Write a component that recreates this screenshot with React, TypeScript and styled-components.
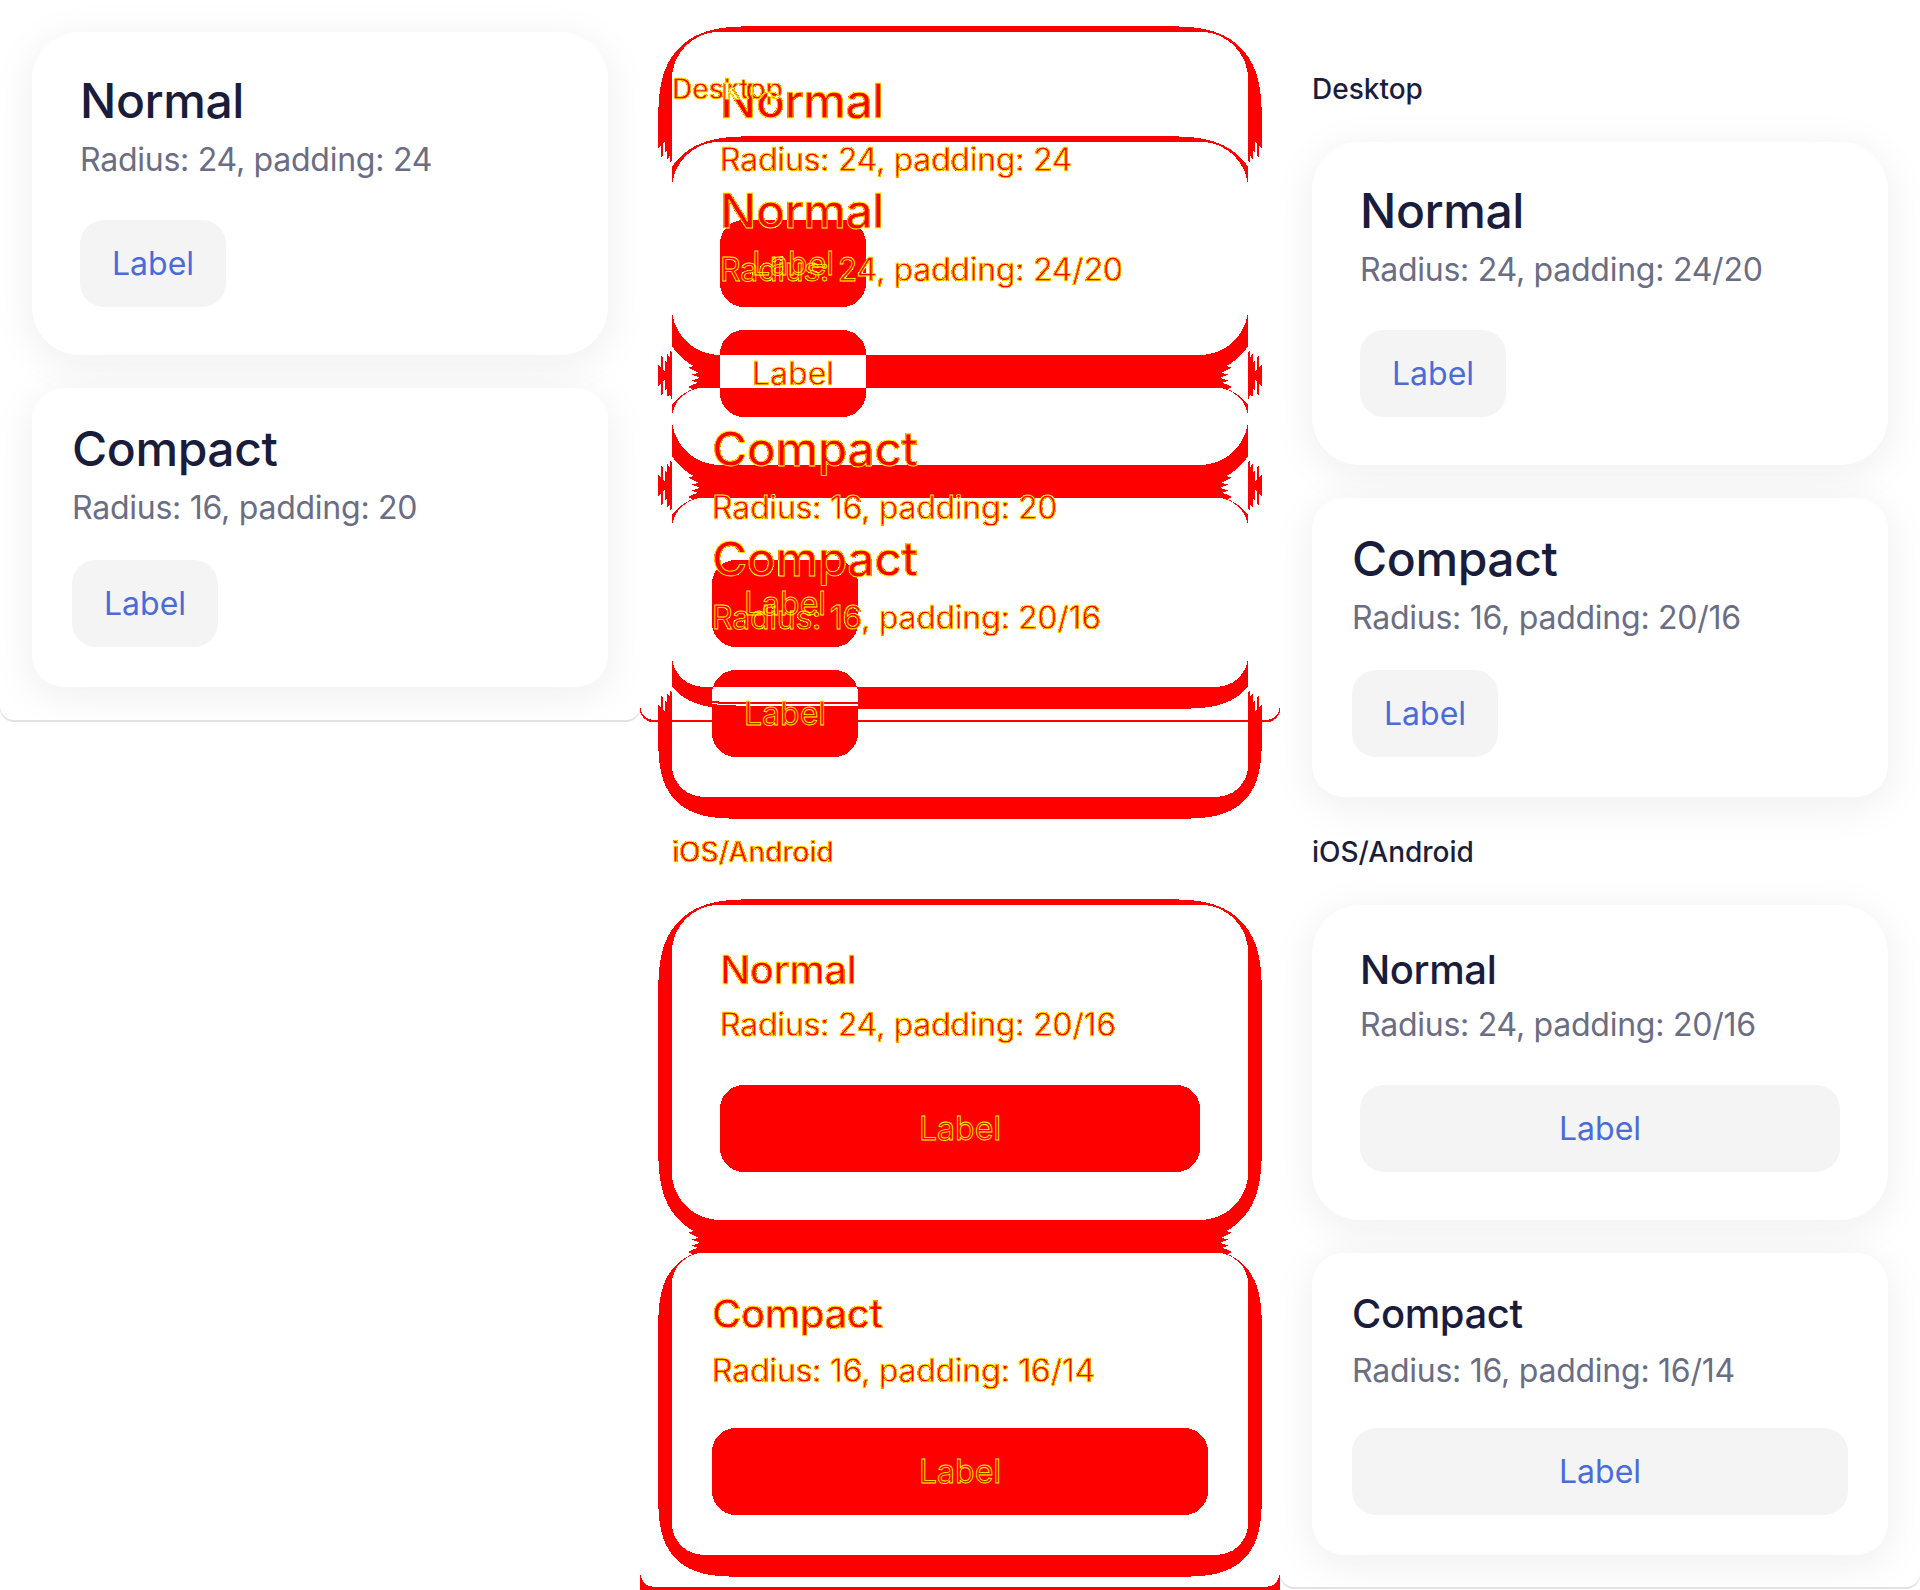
import React from "react";
import styled, { createGlobalStyle, css } from "styled-components";

type Variant = "normal" | "compact";
type Platform = "desktop" | "mobile";

interface CardSpec {
  variant: Variant;
  title: string;
  caption: string;
}

interface Metrics {
  pad: string;
  radius: number;
  titleSize: number;
  titleLh: number;
  subGap: number;
  btnGap: number;
}

const METRICS: Record<string, Metrics> = {
  "desktop-normal": { pad: "48px", radius: 48, titleSize: 48, titleLh: 42, subGap: 18, btnGap: 40 },
  "desktop-compact": { pad: "40px", radius: 32, titleSize: 48, titleLh: 42, subGap: 18, btnGap: 32 },
  "mobile-normal": { pad: "48px", radius: 48, titleSize: 40, titleLh: 34, subGap: 18, btnGap: 40 },
  "mobile-compact": { pad: "44px 40px 40px", radius: 32, titleSize: 40, titleLh: 34, subGap: 20, btnGap: 37 },
};

const legacyCards: CardSpec[] = [
  { variant: "normal", title: "Normal", caption: "Radius: 24, padding: 24" },
  { variant: "compact", title: "Compact", caption: "Radius: 16, padding: 20" },
];

const sections: { label: string; platform: Platform; cards: CardSpec[] }[] = [
  {
    label: "Desktop",
    platform: "desktop",
    cards: [
      { variant: "normal", title: "Normal", caption: "Radius: 24, padding: 24/20" },
      { variant: "compact", title: "Compact", caption: "Radius: 16, padding: 20/16" },
    ],
  },
  {
    label: "iOS/Android",
    platform: "mobile",
    cards: [
      { variant: "normal", title: "Normal", caption: "Radius: 24, padding: 20/16" },
      { variant: "compact", title: "Compact", caption: "Radius: 16, padding: 16/14" },
    ],
  },
];

const GlobalStyle = createGlobalStyle`
  html, body {
    margin: 0;
    padding: 0;
    background: #ffffff;
  }
  body {
    font-family: Inter, "Noto Sans", "Liberation Sans", sans-serif;
    -webkit-font-smoothing: antialiased;
  }
  * { box-sizing: border-box; }
`;

const traceText = css`
  color: transparent;
  -webkit-text-stroke: 0.8px #ffff00;
`;

const Sheet = styled.div`
  display: flex;
  align-items: flex-start;
  width: 1920px;
  height: 1590px;
  overflow: hidden;
  background: #ffffff;
`;

const Column = styled.div`
  flex: 0 0 640px;
  width: 640px;
`;

const Screenshot = styled.div<{ $padTop: number; $padBottom: number; $gap: number; $trace?: boolean }>`
  width: 640px;
  display: flex;
  flex-direction: column;
  gap: ${(p) => p.$gap}px;
  padding: ${(p) => p.$padTop}px 32px ${(p) => p.$padBottom}px;
  background: ${(p) => (p.$trace ? "transparent" : "#ffffff")};
  border-radius: 0 0 14px 14px;
  box-shadow: ${(p) => (p.$trace ? "none" : "0 2px 0 #e2e2e4")};
  overflow: hidden;
`;

const Section = styled.section`
  display: flex;
  flex-direction: column;
  gap: 33px;
`;

const SectionLabel = styled.div<{ $trace?: boolean }>`
  font-size: 28px;
  line-height: 40px;
  font-weight: 500;
  color: #1b1e3b;
  ${(p) => p.$trace && traceText}
`;

const Card = styled.div<{ $pad: string; $radius: number; $trace?: boolean }>`
  display: flex;
  flex-direction: column;
  align-items: flex-start;
  padding: ${(p) => p.$pad};
  border-radius: ${(p) => p.$radius}px;
  background: ${(p) => (p.$trace ? "transparent" : "#ffffff")};
  box-shadow: ${(p) => (p.$trace ? "none" : "0 8px 44px rgba(22, 26, 44, 0.075)")};
`;

const CardTitle = styled.div<{ $size: number; $lh: number; $trace?: boolean }>`
  font-size: ${(p) => p.$size}px;
  line-height: ${(p) => p.$lh}px;
  font-weight: 500;
  color: #191c3a;
  letter-spacing: -0.4px;
  ${(p) => p.$trace && traceText}
`;

const CardCaption = styled.div<{ $gap: number; $trace?: boolean }>`
  margin-top: ${(p) => p.$gap}px;
  font-size: 32px;
  line-height: 40px;
  font-weight: 400;
  letter-spacing: -0.25px;
  color: #6a6d83;
  ${(p) => p.$trace && traceText}
`;

const ActionButton = styled.button<{ $gap: number; $block: boolean; $trace?: boolean }>`
  margin-top: ${(p) => p.$gap}px;
  align-self: ${(p) => (p.$block ? "stretch" : "flex-start")};
  height: 87px;
  padding: 0 32px;
  border: 0;
  border-radius: 24px;
  background: ${(p) => (p.$trace ? "transparent" : "#f4f4f5")};
  color: #4b6cd8;
  font-family: inherit;
  font-size: 32px;
  font-weight: 400;
  line-height: 87px;
  text-align: center;
  cursor: pointer;
  ${(p) => p.$trace && traceText}
`;

const DiffStage = styled.div`
  position: relative;
  width: 640px;
  height: 1590px;
  overflow: hidden;
  background: #ffffff;
`;

const DiffCanvas = styled.div`
  position: relative;
  width: 640px;
  height: 1590px;
  background: #ffffff;
  isolation: isolate;
  filter: url(#pixel-diff);
`;

const DiffOverlay = styled.div<{ $blend?: boolean }>`
  position: absolute;
  top: 0;
  left: 0;
  width: 640px;
  mix-blend-mode: ${(p) => (p.$blend ? "difference" : "normal")};
  pointer-events: none;
`;

const FilterDefs = styled.svg`
  position: absolute;
  width: 0;
  height: 0;
  overflow: hidden;
`;

function StoryCard({ spec, platform, trace }: { spec: CardSpec; platform: Platform; trace?: boolean }) {
  const m = METRICS[`${platform}-${spec.variant}`];
  return (
    <Card $pad={m.pad} $radius={m.radius} $trace={trace}>
      <CardTitle $size={m.titleSize} $lh={m.titleLh} $trace={trace}>
        {spec.title}
      </CardTitle>
      <CardCaption $gap={m.subGap} $trace={trace}>
        {spec.caption}
      </CardCaption>
      <ActionButton $gap={m.btnGap} $block={platform === "mobile"} $trace={trace}>
        Label
      </ActionButton>
    </Card>
  );
}

function BaselineShot({ trace }: { trace?: boolean }) {
  return (
    <Screenshot $padTop={32} $padBottom={33} $gap={33} $trace={trace}>
      {legacyCards.map((c) => (
        <StoryCard key={c.title} spec={c} platform="desktop" trace={trace} />
      ))}
    </Screenshot>
  );
}

function ActualShot({ trace }: { trace?: boolean }) {
  return (
    <Screenshot $padTop={69} $padBottom={32} $gap={35} $trace={trace}>
      {sections.map((s) => (
        <Section key={s.label}>
          <SectionLabel $trace={trace}>{s.label}</SectionLabel>
          {s.cards.map((c) => (
            <StoryCard key={c.title} spec={c} platform={s.platform} trace={trace} />
          ))}
        </Section>
      ))}
    </Screenshot>
  );
}

export default function App() {
  return (
    <>
      <GlobalStyle />
      <FilterDefs aria-hidden="true">
        <filter
          id="pixel-diff"
          x="0"
          y="0"
          width="1"
          height="1"
          colorInterpolationFilters="sRGB"
        >
          <feColorMatrix
            in="SourceGraphic"
            type="matrix"
            values="0 0 0 0 0  0 0 0 0 0  0 0 0 0 0  9 9 9 0 0"
            result="amount"
          />
          <feComponentTransfer in="amount" result="mask">
            <feFuncA type="discrete" tableValues="0 1" />
          </feComponentTransfer>
          <feFlood floodColor="#ff0000" result="red" />
          <feComposite in="red" in2="mask" operator="in" result="marks" />
          <feFlood floodColor="#ffffff" result="paper" />
          <feMerge>
            <feMergeNode in="paper" />
            <feMergeNode in="marks" />
          </feMerge>
        </filter>
      </FilterDefs>
      <Sheet>
        <Column>
          <BaselineShot />
        </Column>
        <Column>
          <DiffStage>
            <DiffCanvas>
              <BaselineShot />
              <DiffOverlay $blend>
                <ActualShot />
              </DiffOverlay>
            </DiffCanvas>
            <DiffOverlay>
              <BaselineShot trace />
            </DiffOverlay>
            <DiffOverlay>
              <ActualShot trace />
            </DiffOverlay>
          </DiffStage>
        </Column>
        <Column>
          <ActualShot />
        </Column>
      </Sheet>
    </>
  );
}
